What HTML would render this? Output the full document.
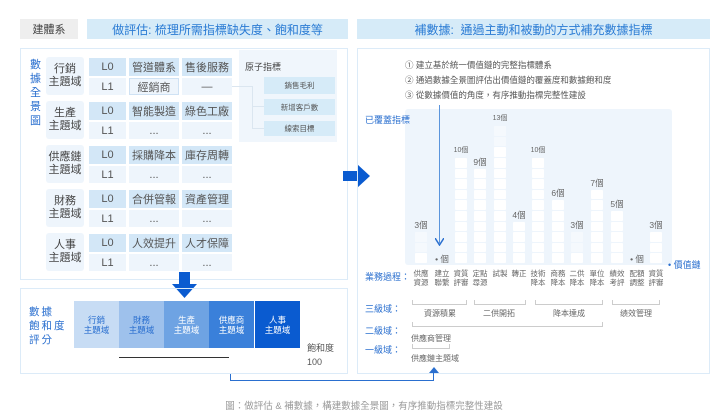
<!DOCTYPE html>
<html><head><meta charset="utf-8"><style>
*{margin:0;padding:0;box-sizing:border-box}
body{width:728px;height:416px;background:#fff;position:relative;overflow:hidden;font-family:"Liberation Sans","Noto Sans CJK TC",sans-serif;color:#555}
.a{position:absolute}
.c{position:absolute;display:flex;align-items:center;justify-content:center;text-align:center}
.dom{background:#eef5fc;border-radius:3px;color:#444;font-size:11px;line-height:13px}
.l0{background:#d3e7f7;color:#555;font-size:11px}
.l1{background:#eef5fc;color:#555;font-size:11px}
.cell{width:12px;height:9.5px;background:#fff;border-radius:1px}
.bl{font-size:7.5px;line-height:9px;color:#666;width:22px}
.br{position:absolute;border:1px solid #ccc;border-top:none;height:5px}
.lab{position:absolute;color:#2a6fcf;font-size:9px}
.sm{position:absolute;font-size:7.5px;color:#666}
</style></head><body>
<!-- headers -->
<div class="c" style="left:20px;top:19px;width:58px;height:20px;background:#eee;color:#444;font-size:11px">建體系</div>
<div class="c" style="left:87px;top:19px;width:261px;height:20px;background:#d6ebf8;color:#2a7bd4;font-size:12px">做評估: 梳理所需指標缺失度、飽和度等</div>
<div class="c" style="left:357px;top:19px;width:353px;height:20px;background:#d6ebf8;color:#2a7bd4;font-size:12px">補數據:&nbsp; 通過主動和被動的方式補充數據指標</div>

<!-- left panel -->
<div class="a" style="left:20px;top:48px;width:328px;height:232px;border:1px solid #dcebf8"></div>
<div class="a" style="left:30px;top:58px;width:12px;color:#2a6fcf;font-size:11px;line-height:14px">數<br>據<br>全<br>景<br>圖</div>
<div class="a" style="left:239px;top:50px;width:98px;height:92px;background:#f0f6fc"></div>
<div class="a" style="left:245px;top:60px;font-size:9px;color:#444">原子指標</div>
<div class="a" style="left:232px;top:86px;width:20px;border-top:1px solid #dbe6f0"></div>
<div class="a" style="left:252px;top:86px;height:43px;border-left:1px solid #dbe6f0"></div>
<div class="a" style="left:252px;top:106px;width:12px;border-top:1px solid #dbe6f0"></div>
<div class="a" style="left:252px;top:128px;width:12px;border-top:1px solid #dbe6f0"></div>
<div class="c" style="left:264px;top:77px;width:71px;height:17px;background:#d6ebf8;font-size:7.5px;color:#555">銷售毛利</div>
<div class="c" style="left:264px;top:99px;width:71px;height:16px;background:#d6ebf8;font-size:7.5px;color:#555">新增客戶數</div>
<div class="c" style="left:264px;top:121px;width:71px;height:15px;background:#d6ebf8;font-size:7.5px;color:#555">線索目標</div>

<!-- rows -->
<div class="c dom" style="left:46px;top:57px;width:38px;height:38px">行銷<br>主題域</div>
<div class="c l0" style="left:89px;top:58px;width:37px;height:18px">L0</div>
<div class="c l0" style="left:129px;top:58px;width:50px;height:18px">管道體系</div>
<div class="c l0" style="left:182px;top:58px;width:50px;height:18px">售後服務</div>
<div class="c l1" style="left:89px;top:78px;width:37px;height:17px">L1</div>
<div class="c l1" style="left:129px;top:78px;width:50px;height:17px;border:1px solid #cfe2f4">經銷商</div>
<div class="c l1" style="left:182px;top:78px;width:50px;height:17px">—</div>

<div class="c dom" style="left:46px;top:101px;width:38px;height:38px">生產<br>主題域</div>
<div class="c l0" style="left:89px;top:102px;width:37px;height:18px">L0</div>
<div class="c l0" style="left:129px;top:102px;width:50px;height:18px">智能製造</div>
<div class="c l0" style="left:182px;top:102px;width:50px;height:18px">綠色工廠</div>
<div class="c l1" style="left:89px;top:122px;width:37px;height:17px">L1</div>
<div class="c l1" style="left:129px;top:122px;width:50px;height:17px">...</div>
<div class="c l1" style="left:182px;top:122px;width:50px;height:17px">...</div>

<div class="c dom" style="left:46px;top:145px;width:38px;height:38px">供應鏈<br>主題域</div>
<div class="c l0" style="left:89px;top:146px;width:37px;height:18px">L0</div>
<div class="c l0" style="left:129px;top:146px;width:50px;height:18px">採購降本</div>
<div class="c l0" style="left:182px;top:146px;width:50px;height:18px">庫存周轉</div>
<div class="c l1" style="left:89px;top:166px;width:37px;height:17px">L1</div>
<div class="c l1" style="left:129px;top:166px;width:50px;height:17px">...</div>
<div class="c l1" style="left:182px;top:166px;width:50px;height:17px">...</div>

<div class="c dom" style="left:46px;top:189px;width:38px;height:38px">財務<br>主題域</div>
<div class="c l0" style="left:89px;top:190px;width:37px;height:18px">L0</div>
<div class="c l0" style="left:129px;top:190px;width:50px;height:18px">合併管報</div>
<div class="c l0" style="left:182px;top:190px;width:50px;height:18px">資產管理</div>
<div class="c l1" style="left:89px;top:210px;width:37px;height:17px">L1</div>
<div class="c l1" style="left:129px;top:210px;width:50px;height:17px">...</div>
<div class="c l1" style="left:182px;top:210px;width:50px;height:17px">...</div>

<div class="c dom" style="left:46px;top:233px;width:38px;height:38px">人事<br>主題域</div>
<div class="c l0" style="left:89px;top:234px;width:37px;height:18px">L0</div>
<div class="c l0" style="left:129px;top:234px;width:50px;height:18px">人效提升</div>
<div class="c l0" style="left:182px;top:234px;width:50px;height:18px">人才保障</div>
<div class="c l1" style="left:89px;top:254px;width:37px;height:17px">L1</div>
<div class="c l1" style="left:129px;top:254px;width:50px;height:17px">...</div>
<div class="c l1" style="left:182px;top:254px;width:50px;height:17px">...</div>

<!-- down arrow -->
<svg class="a" style="left:172px;top:272px" width="26" height="28"><path d="M7 0H18V12H25L12.5 26L0 12H7Z" fill="#0a5bd0"/></svg>

<!-- bottom-left panel -->
<div class="a" style="left:20px;top:288px;width:328px;height:86px;border:1px solid #dcebf8"></div>
<div class="a" style="left:29px;top:104px"></div>
<div class="a" style="left:29px;top:305px;color:#2a6fcf;font-size:10.5px;line-height:14px;letter-spacing:2px">數據<br>飽和度<br>評分</div>
<div class="c" style="left:74px;top:301px;width:45px;height:47px;background:#c7dcf4;color:#2a6fcf;font-size:8.5px;line-height:10px">行銷<br>主題域</div>
<div class="c" style="left:119px;top:301px;width:45px;height:47px;background:#9ec1ec;color:#2a6fcf;font-size:8.5px;line-height:10px">財務<br>主題域</div>
<div class="c" style="left:164px;top:301px;width:45px;height:47px;background:#6ea3e3;color:#fff;font-size:8.5px;line-height:10px">生產<br>主題域</div>
<div class="c" style="left:209px;top:301px;width:45px;height:47px;background:#3a80da;color:#fff;font-size:8.5px;line-height:10px">供應商<br>主題域</div>
<div class="c" style="left:255px;top:301px;width:45px;height:47px;background:#0a5bd0;color:#fff;font-size:8.5px;line-height:10px">人事<br>主題域</div>
<div class="a" style="left:119px;top:357px;width:110px;border-top:1.5px solid #333"></div>
<div class="a" style="left:307px;top:341px;font-size:9px;color:#555;line-height:14px">飽和度<br>100</div>

<!-- right arrow -->
<svg class="a" style="left:343px;top:164px" width="28" height="24"><path d="M0 7H14V0L27 12L14 24V17H0Z" fill="#0a5bd0"/></svg>

<!-- right panel -->
<div class="a" style="left:357px;top:48px;width:353px;height:326px;border:1px solid #dcebf8"></div>
<div class="a" style="left:405px;top:58px;font-size:8.5px;color:#555;line-height:15px">① 建立基於統一價值鏈的完整指標體系<br>② 通過數據全景圖評估出價值鏈的覆蓋度和數據飽和度<br>③ 從數據價值的角度，有序推動指標完整性建設</div>
<div class="a" style="left:405px;top:109px;width:267px;height:156px;background:#eef5fc;border-radius:3px"></div>
<div class="lab" style="left:365px;top:113px;font-size:9px">已覆蓋指標</div>
<div class="a" style="left:439px;top:105px;height:138px;border-left:1px solid #5b95dc"></div>
<svg class="a" style="left:435px;top:238px" width="9" height="8"><path d="M0 0L4.5 7L9 0" fill="none" stroke="#2a6fcf" stroke-width="1.5"/></svg>
<div class="lab" style="left:668px;top:258px;font-size:9px">• 價值鏈</div>
<div id="ch"></div>
<div class="lab" style="left:365px;top:270px;font-size:9px">業務過程：</div>

<div class="lab" style="left:365px;top:302px;font-size:9px">三級域：</div>
<div class="br" style="left:412px;top:300px;width:55px"></div>
<div class="br" style="left:474px;top:300px;width:52px"></div>
<div class="br" style="left:535px;top:300px;width:68px"></div>
<div class="br" style="left:612px;top:300px;width:48px"></div>
<div class="sm" style="left:424px;top:308px;font-size:8px">資源積累</div>
<div class="sm" style="left:483px;top:308px;font-size:8px">二供開拓</div>
<div class="sm" style="left:553px;top:308px;font-size:8px">降本達成</div>
<div class="sm" style="left:620px;top:308px;font-size:8px">绩效管理</div>
<div class="lab" style="left:365px;top:324px;font-size:9px">二級域：</div>
<div class="br" style="left:412px;top:322px;width:191px"></div>
<div class="sm" style="left:411px;top:333px;font-size:8px">供應商管理</div>
<div class="lab" style="left:365px;top:343px;font-size:9px">一級域：</div>
<div class="br" style="left:412px;top:344px;width:38px"></div>
<div class="sm" style="left:411px;top:353px;font-size:8px">供應鏈主題域</div>

<!-- connector -->
<div class="a" style="left:230px;top:374px;height:7px;border-left:1.5px solid #2a6fcf"></div>
<div class="a" style="left:230px;top:380px;width:204px;border-top:1.5px solid #2a6fcf"></div>
<div class="a" style="left:433px;top:370px;height:11px;border-left:1.5px solid #2a6fcf"></div>
<svg class="a" style="left:429px;top:367px" width="10" height="6"><path d="M0 6L5 0L10 6Z" fill="#2a6fcf"/></svg>

<div class="a" style="left:0;top:398px;width:728px;text-align:center;font-size:9.5px;color:#999">圖：做評估 &amp; 補數據，構建數據全景圖，有序推動指標完整性建設</div>

<script>
var xs=[415,436,455,474,494,513,532,552,571,591,611,631,650];
var v=[3,0,10,9,13,4,10,6,3,7,5,0,3];
var lb=[["供應","資源"],["建立","聯繫"],["資質","評審"],["定點","尋源"],["試製",""],["轉正",""],["技術","降本"],["商務","降本"],["二供","降本"],["單位","降本"],["績效","考評"],["配額","調整"],["資質","評審"]];
var h="";
for(var i=0;i<13;i++){
 var x=xs[i];
 for(var k=0;k<v[i];k++){
  var y=264-10.6*(k+1);
  var op=(i==0||i==8)&&k>0?"background:#f5f9fd;":(i==4&&k>=11?"background:#f5f9fd;":"");
  h+='<div class="a cell" style="left:'+x+'px;top:'+y+'px;'+op+'"></div>';
 }
 var ty=v[i]?264-10.6*v[i]-13:253;
 var t=v[i]?v[i]+'個':'• 個';
 h+='<div class="a" style="left:'+(x-4)+'px;top:'+ty+'px;width:20px;text-align:center;font-size:'+(v[i]>=10?7:8.5)+'px;color:#666">'+t+'</div>';
 h+='<div class="c bl" style="left:'+(x-5)+'px;top:269px;height:20px;align-items:flex-start">'+lb[i][0]+'<br>'+lb[i][1]+'</div>';
}
document.getElementById("ch").innerHTML=h;
</script>
</body></html>
